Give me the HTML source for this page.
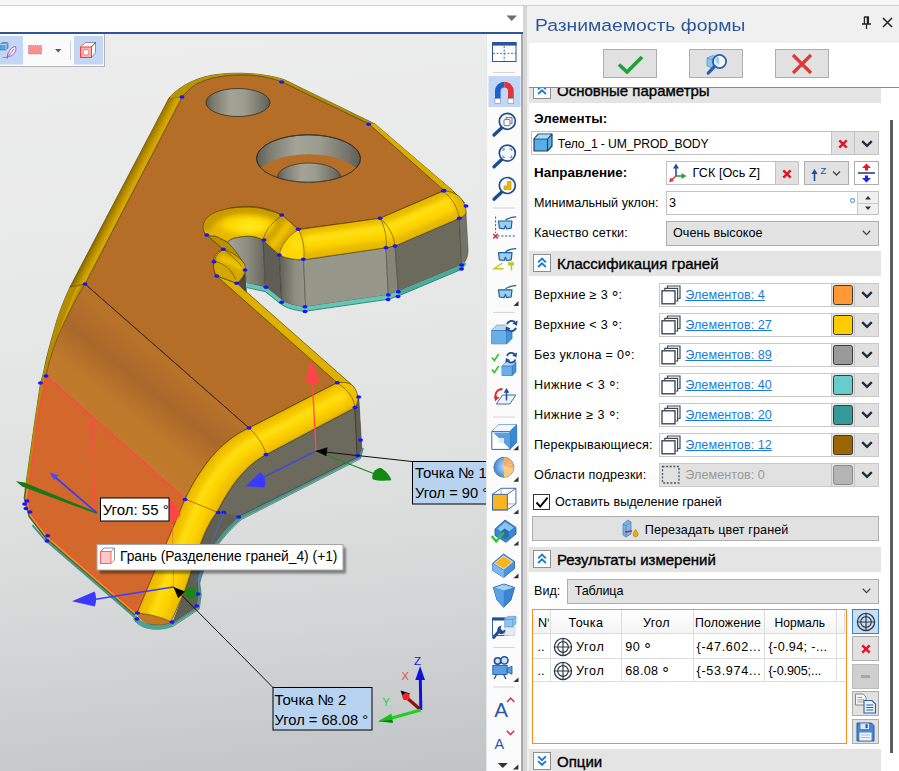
<!DOCTYPE html>
<html lang="ru">
<head>
<meta charset="utf-8">
<title>Разнимаемость формы</title>
<style>
*{box-sizing:border-box;margin:0;padding:0}
html,body{width:899px;height:771px;overflow:hidden;background:#fff}
body{position:relative;font-family:"Liberation Sans","DejaVu Sans",sans-serif;font-size:12.6px;color:#000}
.abs{position:absolute}
.t{position:absolute;white-space:nowrap;line-height:1}
#topstrip{left:0;top:0;width:524px;height:34px;background:#fff}
#topstrip .g0{left:0;top:0;width:899px;height:5px;background:#f7f7f7}
#topline{left:0;top:5px;width:899px;height:1px;background:#cfcfcf}
#blueline{left:0;top:32px;width:523px;height:2px;background:#2f5597}
#vp{left:0;top:34px;width:487px;height:737px;background:linear-gradient(174deg,#ecedec 0%,#e7e9e8 35%,#dfe1e0 60%,#d2d5d5 80%,#c1c4c5 100%);overflow:hidden}
#vtb{left:486px;top:34px;width:37px;height:737px;background:#fbfbfb;border-left:1px solid #e6e6e6;border-right:2px solid #a9a9a9}
#sep{left:523px;top:6px;width:4px;height:765px;background:#d6d6d6}
#panel{left:527px;top:6px;width:372px;height:765px;background:#f0f0f0}
#pwhite{left:529px;top:43px;width:370px;height:728px;background:#fff}
#pline{left:529px;top:87px;width:370px;height:1px;background:#8a8a8a}
.sh{position:absolute;left:529px;width:352px;background:#e4e4e4}
.sh .ic{position:absolute;left:4px;top:3px;width:18px;height:18px;border:1px solid #8f8f8f;background:#fdfdfd}
.sh .tt{position:absolute;left:28px;top:4px;font-size:15px;line-height:17px;white-space:nowrap;-webkit-text-stroke:0.35px #000}
.btn{position:absolute;background:#e1e1e1;border:1px solid #adadad}
.inp{position:absolute;background:#fff;border:1px solid #c3c3c3}
.dg{font-size:1.32em;line-height:0;position:relative;top:4.2px;letter-spacing:0}
.lnk{color:#1a7ae0;text-decoration:underline}
</style>
</head>
<body>
<!-- top strip -->
<div class="abs" id="topstrip"><div class="abs g0"></div></div>
<div class="abs" id="sep"></div>
<div class="abs" id="panel"></div>
<div class="abs" style="left:0;top:0;width:899px;height:5px;background:#f7f7f7"></div>
<div class="abs" id="topline"></div>
<div class="abs" id="blueline"></div>
<svg class="abs" style="left:506px;top:15px" width="12" height="7" viewBox="0 0 12 7"><path d="M0.5,0.5 L11,0.5 L5.7,6 Z" fill="#6d6d6d"/></svg>

<!-- 3D viewport -->
<div class="abs" id="vp">
<svg class="abs" style="left:0;top:0" width="487" height="737" viewBox="0 34 487 737">
<defs>
<linearGradient id="gYel" x1="0" y1="0" x2="0" y2="1"><stop offset="0" stop-color="#c99d00"/><stop offset="0.35" stop-color="#ffd500"/><stop offset="0.7" stop-color="#f6c400"/><stop offset="1" stop-color="#d9a800"/></linearGradient>
<linearGradient id="gBend" gradientUnits="userSpaceOnUse" x1="190" y1="340" x2="110" y2="440"><stop offset="0" stop-color="#b56e28"/><stop offset="0.25" stop-color="#b8732a"/><stop offset="0.5" stop-color="#aa682a"/><stop offset="0.75" stop-color="#be792b"/><stop offset="1" stop-color="#c27a2c"/></linearGradient>
<linearGradient id="gHole" x1="0" y1="0" x2="1" y2="0"><stop offset="0" stop-color="#5e5e54"/><stop offset="0.12" stop-color="#7c7c70"/><stop offset="0.38" stop-color="#a3a396"/><stop offset="0.6" stop-color="#9c9c8f"/><stop offset="0.88" stop-color="#74746a"/><stop offset="1" stop-color="#5c5c54"/></linearGradient>
<linearGradient id="gCorner" x1="0" y1="0" x2="1" y2="0"><stop offset="0" stop-color="#5e5e54"/><stop offset="0.6" stop-color="#8e8e82"/><stop offset="1" stop-color="#96968a"/></linearGradient>
<linearGradient id="gNotch" x1="0" y1="0" x2="1" y2="0"><stop offset="0" stop-color="#a4a498"/><stop offset="0.5" stop-color="#8e8e82"/><stop offset="1" stop-color="#66665c"/></linearGradient>
<filter id="bl4" filterUnits="userSpaceOnUse" x="0" y="0" width="500" height="800"><feGaussianBlur stdDeviation="3.2"/></filter>
<filter id="bl2" filterUnits="userSpaceOnUse" x="0" y="0" width="500" height="800"><feGaussianBlur stdDeviation="2"/></filter>
<clipPath id="cArm"><path d="M337.3,382.7 L249,428 C227,438 205,458 185,499 L137,613 C140,622 150,626 165,624 L171,622 L185,590 L199.5,547 C205,530 212,518 217,512 C225,497 240,468 266,454.6 L355,407.6 C360,400 358,390 351.5,384.5 C347,382 342,382 337.3,382.7 Z"/></clipPath>
<clipPath id="cFront"><path d="M443.3,191 L380,218.3 L298.5,229.6 L282.5,215.3 C275,212 270,210.8 268,210.4 C262,208 255,207.3 248.5,207.2 C240,207 233,207.6 227.4,208.8 C220,210.5 215,212 211.2,214.5 C206,218 203,222.5 203.1,227.4 C203.2,231 204.5,233.5 207.2,235.5 L216,236.3 L227.4,242 C230,239.5 233,238 237.1,237.5 C241,236.5 246,236.2 250.1,236.3 C255,236.5 259.5,238 263.1,240.4 L279.3,255 C285,258 295,260 303.6,259.8 L386,247.7 L395,246 L459.3,218.3 C463,217 465.5,215 466,212.7 C466.3,207 463.5,200 458,195.5 C454,192.5 449,191 443.3,191 Z"/></clipPath>
<clipPath id="cHole2"><ellipse cx="308.5" cy="158.5" rx="52" ry="23.7"/></clipPath>
<linearGradient id="gRimL" gradientUnits="userSpaceOnUse" x1="117.5" y1="192" x2="129.5" y2="198.2"><stop offset="0" stop-color="#6a5200"/><stop offset="0.3" stop-color="#a07c00"/><stop offset="0.75" stop-color="#cfa200"/><stop offset="1" stop-color="#dcae00"/></linearGradient>
<filter id="bl1" filterUnits="userSpaceOnUse" x="0" y="0" width="500" height="800"><feGaussianBlur stdDeviation="1.3"/></filter>
</defs>

<!-- silhouette (yellow rim) -->
<path d="M169,98 C180,85 200,76 218,74.4 C235,72 265,73 284.3,79.7 L375,124 L452.6,190.5 L464.5,202.7 L443,195 L300,240 L237,284 L351,384.5 L337,390 L185,505 L137,613 L48,536 L32,515 L27.5,498 L25.2,489.4 L34.7,422 L40.5,383 L43.4,373 C46,358 50,345 53.5,332 C58,315 64,300 70,287 Z" fill="#d6a900" stroke="#4a3c00" stroke-width="0.7"/>
<!-- left rim shading -->
<path d="M169,98 L70,287 L85,284 L182,97 Z" fill="url(#gRimL)"/>
<path d="M70,287 C64,300 58,315 53.5,332 L43.4,373 L40.5,383 L34.7,422 L25.2,489.4 L29,488 L37.6,420 L46,376 C50,355 60,325 85,284 Z" fill="#b48c00"/>
<path d="M79,286 C70,302 60,332 50,362" fill="none" stroke="#d8aa00" stroke-width="2.5" opacity="0.8"/>
<path d="M70,287 L85,284 M169,98 L182,97" stroke="#3a2e00" stroke-width="0.5"/>
<!-- top right rim -->
<path d="M282,82 L369,124 L375,124 L284.3,79.7 Z" fill="#ae8e08"/>
<path d="M369,124 L444,190.5 L452.6,190.5 L375,124 Z" fill="#d8ac00"/>
<path d="M182,97 C188,90 192,87 195.4,84.6 C204,80 212,78 218,77 C228,75 240,74.5 248,75 C262,76 272,78 282,82 L284.3,79.7 C265,73 235,72 218,74.4 C200,76 180,85 169,98 Z" fill="#b89600"/>

<!-- bottom thin strips under red face -->
<path d="M27.7,487.8 L26.2,498.1 L30.9,515.6 L47.1,537.0 L136.1,614.0" fill="none" stroke="#d4a800" stroke-width="2.8" stroke-linejoin="round"/>
<path d="M25.9,487.5 L24.4,498.3 L29.3,516.5 L45.9,538.3 L135.0,615.3" fill="none" stroke="#5a5a44" stroke-width="1.6" stroke-linejoin="round"/>
<path d="M32.4,525.1 L44.8,539.6 L133.9,616.6" fill="none" stroke="#4a9688" stroke-width="2" stroke-linejoin="round"/>
<path d="M134.5,616 C140,627.5 160,628.5 172.5,623.5 L197,607.5 L199,594.5 L197.6,582.5 C205,552.5 223,532.5 240.2,517.3 L358.6,456.8 L361.3,447.5" fill="none" stroke="#4a9688" stroke-width="3.8" stroke-linejoin="round"/>
<path d="M133.3,618.5 C140,630.5 160,631.5 173.5,626 L199.2,609 L201.2,594.8 L199.7,583 C207.2,553.8 225,534.2 241.4,519.5 L360.3,458.8 L363.3,448.3" fill="none" stroke="#2c5c54" stroke-width="0.7" stroke-linejoin="round"/>
<path d="M138,617 C142,626 160,628 172,623 L172.5,626.5 C160,631.5 140,630.5 134.5,619 Z" fill="#4fa294"/>

<!-- flat orange top -->
<path d="M182,97 C188,90 192,87 195.4,84.6 C204,80 212,78 218,77 C228,75 240,74.5 248,75 C262,76 272,78 282,82 L369,124 L444,190.5 L380,218.3 L298.3,229.3 C290,222 285,217 281.7,215 C270,208 250,205 240,206.7 C225,208 210,214 205,223 C203,229 204,233 206.7,235 L223.3,249.3 C216,252 212,258 214,262 C213,268 214,273 216.7,276 L337.3,382.7 L249,428 L85,284 Z" fill="#b56e28" stroke="#3a2a10" stroke-width="0.6"/>
<!-- bend -->
<path d="M85,284 L249,428 C227,438 205,458 185,499 L46,376 C50,355 60,325 85,284 Z" fill="url(#gBend)" stroke="#3a2a10" stroke-width="0.5"/>
<!-- red face -->
<path d="M46,376 L185,499 L137,613 L48,536 L32,515 L27.5,498 L29,488 L37.6,420 Z" fill="#d3682c"/>
<path d="M46,376 L185,499 L137,613 L48,536 L32,515 L27.5,498 L29,488 L37.6,420 Z" fill="none" stroke="#ff4848" stroke-width="1.6" stroke-linejoin="round"/>

<!-- holes -->
<ellipse cx="238" cy="102.5" rx="32" ry="14" fill="url(#gHole)" stroke="#2e2e26" stroke-width="0.8"/>
<ellipse cx="308.5" cy="158.5" rx="52" ry="23.7" fill="url(#gHole)" stroke="#2e2e26" stroke-width="0.8"/>
<g clip-path="url(#cHole2)">
  <ellipse cx="308.5" cy="178" rx="52" ry="23.7" fill="#b56e28"/>
  <ellipse cx="309" cy="177" rx="31.5" ry="14" fill="url(#gHole)" stroke="#2e2e26" stroke-width="0.7"/>
</g>
<ellipse cx="308.5" cy="158.5" rx="52" ry="23.7" fill="none" stroke="#2e2e26" stroke-width="0.8"/>

<!-- arm lower-right rim -->
<path d="M216.7,276 L337.3,382.7 L351.5,384.5 L236.7,283.3 Z" fill="#deb000" stroke="#4a3c00" stroke-width="0.5"/>

<!-- grey under arm -->
<path d="M266,454.6 L355,407.6 L358.8,398.5 L361.7,447.4 L358.2,456.7 L239.4,516 C225,528 205,550 197,580 L198,594 L196,607 L173,622 L185,590 L199.5,547 C205,530 212,518 217,512 C225,497 240,468 266,454.6 Z" fill="#6b6a5c" stroke="#2e2e26" stroke-width="0.5"/>
<path d="M354.7,408.5 L358.8,398.5 L361.7,447.4 L358.2,456.7 L356.8,452 Z" fill="#5e5e55"/>
<path d="M354.7,408.5 C355.8,425 356.3,440 356.8,452 L358.2,456.7" fill="none" stroke="#26261f" stroke-width="0.6"/>
<path d="M217,512 L239.4,516 C225,528 205,550 197,580 L198,594 L196,607 L173,622 L185,590 L199.5,547 C205,530 212,518 217,512 Z" fill="#5f5f54"/>

<!-- arm yellow fillet -->
<g clip-path="url(#cArm)">
  <rect x="120" y="370" width="260" height="270" fill="#f0c000"/>
  <path d="M346,395 L258,441 C236,452 216,472 200,508 L155,618" fill="none" stroke="#ffd600" stroke-width="16" filter="url(#bl4)"/>
  <path d="M347,393 L257,439 C234,450 214,470 197,505 L152,616" fill="none" stroke="#ffe11a" stroke-width="5" filter="url(#bl2)" opacity="0.8"/>
  <path d="M357,407.5 L268,457 C244,469 229,493 219,515 L201,549 L187,593 L174,623" fill="none" stroke="#c29600" stroke-width="3.4" filter="url(#bl2)"/>
  <path d="M337,382 L249,427.5 C227,437.5 204.5,457.5 184.5,498.5 L136.5,612.5" fill="none" stroke="#d4a600" stroke-width="2.5" filter="url(#bl2)"/>
</g>
<path d="M337.3,382.7 L249,428 C227,438 205,458 185,499 L137,613 C140,622 150,626 165,624 L171,622 L185,590 L199.5,547 C205,530 212,518 217,512 C225,497 240,468 266,454.6 L355,407.6 C360,400 358,390 351.5,384.5 C347,382 342,382 337.3,382.7 Z" fill="none" stroke="#3a2e00" stroke-width="0.6"/>
<path d="M137,613 C150,614 164,618 171,622 L165,624 C150,626 140,622 137,613 Z" fill="#bf7a22"/>
<path d="M141,618.5 C150,621.5 160,622.5 168,622.5" fill="none" stroke="#ff5050" stroke-width="0.7" stroke-dasharray="2 1.5"/>
<path d="M249,428 C258,436 264,446 266,454.6 M185,499 L217,512 M337.3,382.7 C348,390 354,398 355,407.6 M137,613 C150,614 164,618 171,622" fill="none" stroke="#3a2e00" stroke-width="0.5"/>

<!-- front block greys -->
<path d="M227.4,242 C230,239.5 233,238 237.1,237.5 C241,236.5 246,236.2 250.1,236.3 C255,236.5 259.5,238 263.1,240.4 L265.5,287.4 L246.9,283.3 L245.3,272.8 L243.6,263.1 L234.7,250.1 Z" fill="url(#gNotch)" stroke="#2e2e26" stroke-width="0.4"/>
<path d="M237.1,283.3 L245.3,272.8 L246.9,292.3 L244.4,290.6 Z" fill="#4a4a42"/>
<path d="M263.1,240.4 L279.3,255 L281.7,300.4 L265.5,287.4 Z" fill="#5e5e54" stroke="#2e2e26" stroke-width="0.4"/>
<path d="M279.3,255 C287,258.5 295,260 303.6,259.8 L305.6,306.9 C297,306.5 288,304.5 281.7,300.4 Z" fill="url(#gCorner)" stroke="#2e2e26" stroke-width="0.4"/>
<path d="M303.6,259.8 L386,247.7 L388.3,295 L305.6,306.9 Z" fill="#969689" stroke="#2e2e26" stroke-width="0.4"/>
<path d="M386,247.7 L395,246 L398.3,291.7 L388.3,295 Z" fill="#85857a" stroke="#2e2e26" stroke-width="0.4"/>
<path d="M395,246 L459.3,218.3 L461.7,265 L398.3,291.7 Z" fill="#6b6a5c" stroke="#2e2e26" stroke-width="0.4"/>
<path d="M459.3,218.3 C463,217 465.5,215 466,212.7 L468.1,250 C468,257 466,262 461.7,265 Z" fill="#74746a" stroke="#2e2e26" stroke-width="0.4"/>
<!-- teal under front block -->
<path d="M246.9,285.3 L265.5,289.4 L281.7,302.4 C288,306.5 297,308.7 305.6,308.9 L388.3,297 L398.3,293.7 L461.7,267" fill="none" stroke="#5fc8b8" stroke-width="4" stroke-linejoin="round"/>
<path d="M398.3,293.7 L461.7,267 L464.8,262.5" fill="none" stroke="#4cac9c" stroke-width="4" stroke-linejoin="round"/>
<path d="M246.9,287.6 L265.5,291.7 L281.7,304.7 C288,308.8 297,311 305.6,311.2 L388.3,299.3 L398.3,296 L461.7,269.3" fill="none" stroke="#2e7a70" stroke-width="0.9"/>

<!-- rim sliver at notch -->
<path d="M207.2,235.5 L216,236.3 L227.4,242 L234.7,250.1 L243.6,263.1 L223.4,249.3 Z" fill="#b89200" stroke="#3a2e00" stroke-width="0.4"/>

<!-- front yellow fillet -->
<g clip-path="url(#cFront)">
  <rect x="200" y="185" width="270" height="80" fill="#e6b600"/>
  <path d="M454,203 L388,231 L303,243" fill="none" stroke="#ffd800" stroke-width="17" filter="url(#bl4)"/>
  <path d="M452,200 L386,228 L304,240" fill="none" stroke="#ffe11a" stroke-width="6" filter="url(#bl2)" opacity="0.85"/>
  <path d="M281.7,215.3 L298.5,229.6 L279.3,255 L263.1,240.4 Z" fill="#d2a400"/>
  <path d="M290,222.5 L271,248" fill="none" stroke="#f2c400" stroke-width="7" filter="url(#bl2)"/>
  <path d="M298.5,229.6 C303,238 305,250 303.6,259.8 C295,260 285,258 279.3,255 C281,245 288,236 298.5,229.6 Z" fill="#ffd600"/>
  <path d="M292,246 L300,244" fill="none" stroke="#ffe420" stroke-width="9" filter="url(#bl4)"/>
  <path d="M206,231 C206,216 228,209 250,210 C264,211 274,214 282,219" fill="none" stroke="#c79a00" stroke-width="9" filter="url(#bl2)"/>
  <ellipse cx="247" cy="225" rx="26" ry="9" fill="#ffdc00" filter="url(#bl4)"/>
  <ellipse cx="250" cy="226" rx="14" ry="5.5" fill="#ffe71a" filter="url(#bl4)"/>
</g>
<path d="M443.3,191 L380,218.3 L298.5,229.6 L282.5,215.3 C275,212 270,210.8 268,210.4 C262,208 255,207.3 248.5,207.2 C240,207 233,207.6 227.4,208.8 C220,210.5 215,212 211.2,214.5 C206,218 203,222.5 203.1,227.4 C203.2,231 204.5,233.5 207.2,235.5 L216,236.3 L227.4,242 C230,239.5 233,238 237.1,237.5 C241,236.5 246,236.2 250.1,236.3 C255,236.5 259.5,238 263.1,240.4 L279.3,255 C285,258 295,260 303.6,259.8 L386,247.7 L395,246 L459.3,218.3 C463,217 465.5,215 466,212.7 C466.3,207 463.5,200 458,195.5 C454,192.5 449,191 443.3,191 Z" fill="none" stroke="#3a2e00" stroke-width="0.6"/>
<path d="M282.5,215.3 C272,222 265,231 263.1,240.4 M298.5,229.6 C288,236 281,245 279.3,255 M298.5,229.6 C303,238 305,250 303.6,259.8 M380,218.3 C385,227 387,238 386,247.7 M380,218.3 C389,226 394,236 395,246 M443.3,191 C452,198 458,208 459.3,218.3" fill="none" stroke="#3a2e00" stroke-width="0.5"/>

<!-- small notch yellow -->
<path d="M223.4,249.3 C218,253 214.5,257.5 214.5,261.5 C212.5,267 214,272.5 216.9,276 L237.1,283.3 C241,280 244,276 245.3,271.2 C245.6,268.5 245.2,266 244.4,263.9 C240,257.5 232,252 223.4,249.3 Z" fill="#d4a800" stroke="#3a2e00" stroke-width="0.6"/>
<path d="M219,259 C227,259 237,264 242.5,269" fill="none" stroke="#f6ca00" stroke-width="5" filter="url(#bl2)"/>
<path d="M214.5,261.5 C224,263 232,270 235.5,279.5 M223.4,249.3 C232,256 239,262 242,267" fill="none" stroke="#3a2e00" stroke-width="0.5"/>

<!-- tangent line -->
<path d="M85,284 L249,428" stroke="#2a1c08" stroke-width="0.7"/>

<!--ANNOT--><!-- vertices -->
<g fill="#1414ff">
<ellipse cx="182" cy="97" rx="2.5" ry="1.8"/>
<ellipse cx="281.6" cy="82" rx="2.5" ry="1.8"/>
<ellipse cx="368.6" cy="124.3" rx="2.5" ry="1.8"/>
<ellipse cx="444" cy="190.5" rx="2.5" ry="1.8"/>
<ellipse cx="85" cy="284" rx="2.5" ry="1.8"/>
<ellipse cx="249" cy="428" rx="2.5" ry="1.8"/>
<ellipse cx="46" cy="376" rx="2.5" ry="1.8"/>
<ellipse cx="40.5" cy="383" rx="2.5" ry="1.8"/>
<ellipse cx="337.3" cy="382.7" rx="2.5" ry="1.8"/>
<ellipse cx="355" cy="407.6" rx="2.5" ry="1.8"/>
<ellipse cx="266" cy="454.6" rx="2.5" ry="1.8"/>
<ellipse cx="357.6" cy="455.7" rx="2.5" ry="1.8"/>
<ellipse cx="358.7" cy="397" rx="2.5" ry="1.8"/>
<ellipse cx="185" cy="499.5" rx="2.5" ry="1.8"/>
<ellipse cx="218.3" cy="512.5" rx="2.5" ry="1.8"/>
<ellipse cx="224" cy="512.5" rx="2.5" ry="1.8"/>
<ellipse cx="238.6" cy="517" rx="2.5" ry="1.8"/>
<ellipse cx="137.4" cy="613" rx="2.5" ry="1.8"/>
<ellipse cx="137" cy="619" rx="2.5" ry="1.8"/>
<ellipse cx="172" cy="622" rx="2.5" ry="1.8"/>
<ellipse cx="196.6" cy="606" rx="2.5" ry="1.8"/>
<ellipse cx="198" cy="594" rx="2.5" ry="1.8"/>
<ellipse cx="24.6" cy="504" rx="2.5" ry="1.8"/>
<ellipse cx="26" cy="508.5" rx="2.5" ry="1.8"/>
<ellipse cx="30" cy="512" rx="2.5" ry="1.8"/>
<ellipse cx="27" cy="501" rx="2.5" ry="1.8"/>
<ellipse cx="47.7" cy="535.7" rx="2.5" ry="1.8"/>
<ellipse cx="47" cy="541" rx="2.5" ry="1.8"/>
<ellipse cx="360.5" cy="440" rx="2.5" ry="1.8"/>
<ellipse cx="206.7" cy="235" rx="2.5" ry="1.8"/>
<ellipse cx="223.3" cy="249.3" rx="2.5" ry="1.8"/>
<ellipse cx="214" cy="261.7" rx="2.5" ry="1.8"/>
<ellipse cx="216.7" cy="276" rx="2.5" ry="1.8"/>
<ellipse cx="236.7" cy="283.3" rx="2.5" ry="1.8"/>
<ellipse cx="245" cy="270" rx="2.5" ry="1.8"/>
<ellipse cx="264" cy="240" rx="2.5" ry="1.8"/>
<ellipse cx="279.3" cy="255" rx="2.5" ry="1.8"/>
<ellipse cx="281.7" cy="215" rx="2.5" ry="1.8"/>
<ellipse cx="298.3" cy="229.3" rx="2.5" ry="1.8"/>
<ellipse cx="303.3" cy="259.3" rx="2.5" ry="1.8"/>
<ellipse cx="380" cy="218.3" rx="2.5" ry="1.8"/>
<ellipse cx="386" cy="247.7" rx="2.5" ry="1.8"/>
<ellipse cx="395" cy="246" rx="2.5" ry="1.8"/>
<ellipse cx="443.3" cy="191" rx="2.5" ry="1.8"/>
<ellipse cx="459.3" cy="218.3" rx="2.5" ry="1.8"/>
<ellipse cx="466" cy="206" rx="2.5" ry="1.8"/>
<ellipse cx="461.7" cy="265" rx="2.5" ry="1.8"/>
<ellipse cx="398.3" cy="291.7" rx="2.5" ry="1.8"/>
<ellipse cx="388.3" cy="295" rx="2.5" ry="1.8"/>
<ellipse cx="305" cy="306.7" rx="2.5" ry="1.8"/>
<ellipse cx="281.7" cy="302.3" rx="2.5" ry="1.8"/>
<ellipse cx="266" cy="287.3" rx="2.5" ry="1.8"/>
<ellipse cx="305" cy="311.5" rx="2.5" ry="1.8"/>
<ellipse cx="388" cy="299.5" rx="2.5" ry="1.8"/>
<ellipse cx="398" cy="296.5" rx="2.5" ry="1.8"/>
<ellipse cx="461.5" cy="269" rx="2.5" ry="1.8"/>
</g>
<!-- point 1 arrows -->
<path d="M316,451 L312.3,380" stroke="#ff4a4a" stroke-width="1.3"/>
<path d="M311.6,359.6 L319.8,381.6 C316.5,384.2 308.5,384.2 305.3,381.6 Z" fill="#ff4545"/>
<path d="M316,451 L262,478" stroke="#3c3cff" stroke-width="1.3"/>
<path d="M245.6,486.3 L260,472.6 C264,474 266.5,482 264.8,487.6 Z" fill="#3a3aff"/>
<path d="M316,451 L376,474.5" stroke="#1a8a1a" stroke-width="1.3"/>
<path d="M391.5,480.3 C386,481 378,481.2 372.6,479.2 C371,474 375,468.6 380.6,467.8 C385,470 389.5,475 391.5,480.3 Z" fill="#148a14"/>
<path d="M316,451 L412,461.5" stroke="#111" stroke-width="1"/>
<path d="M316,451 L327.5,447.3 L326.3,456.3 Z" fill="#000"/>
<rect x="412.5" y="461.5" width="90" height="42.5" fill="#b7d3ef" stroke="#000" stroke-width="1"/>
<text x="415" y="478" font-family="'Liberation Sans',sans-serif" font-size="15" fill="#000">Точка № 1</text>
<text x="415" y="498.4" font-family="'Liberation Sans',sans-serif" font-size="14.7" fill="#000">Угол = 90 °</text>

<!-- point 2 arrows -->
<path d="M173.5,587 L172.5,520" stroke="#ff5a5a" stroke-width="0.8" opacity="0.8"/>
<path d="M168.3,497 C173,502 178,508 180.6,514.5 L172.6,524.5 C170,516 168.5,506 168.3,497 Z" fill="#ff4545"/>
<path d="M196,582 L224,512.5" stroke="#5a5aff" stroke-width="0.8"/>
<path d="M173.5,587 L94,599.5" stroke="#3c3cff" stroke-width="1.3"/>
<path d="M72,601.3 L94.5,591.6 C96.5,595.5 96.5,602.5 94.8,606.6 Z" fill="#3a3aff"/>
<circle cx="190.9" cy="593" r="5.6" fill="#148a14"/>
<path d="M173.5,587 L273,687.5" stroke="#111" stroke-width="1"/>
<path d="M173.5,587 L185,591.6 L178.2,598.3 Z" fill="#000"/>
<rect x="273" y="687.5" width="99" height="42.5" fill="#b7d3ef" stroke="#000" stroke-width="1"/>
<text x="274.6" y="705" font-family="'Liberation Sans',sans-serif" font-size="15" fill="#000">Точка № 2</text>
<text x="274.6" y="725" font-family="'Liberation Sans',sans-serif" font-size="14.7" fill="#000">Угол = 68.08 °</text>

<!-- angle arrows -->
<path d="M95.4,518 L92,424" stroke="#ff4a4a" stroke-width="1.2"/>
<path d="M91.6,417.5 L94.6,428.5 L89.4,428.7 Z" fill="#ff4a4a"/>
<path d="M97,513 L52,474.5" stroke="#3c3cf0" stroke-width="1.7"/>
<path d="M49.6,472.6 L58.5,475.2 L54.4,480.2 Z" fill="#4a4aff"/>
<path d="M15.9,481.3 L24.5,482.6 L97,512.4 L96.4,513.8 L22.5,486.8 Z" fill="#187818"/>
<rect x="100.5" y="498" width="68.5" height="23" fill="#fff" stroke="#000" stroke-width="1"/>
<text x="102.7" y="515.4" font-family="'Liberation Sans',sans-serif" font-size="15" fill="#000">Угол: 55 °</text>

<!-- tooltip -->
<rect x="100" y="547.5" width="246" height="26" fill="#000" opacity="0.42" filter="url(#bl1)"/>
<rect x="97" y="544.5" width="246" height="25.5" fill="#fff" stroke="#a6a6a6" stroke-width="1"/>
<path d="M100.5,551.5 L104,548 L114.5,548 L114.5,560 L111,563.5 L100.5,563.5 Z" fill="#fff" stroke="#7a7a7a" stroke-width="0.8"/>
<rect x="100.5" y="551.5" width="10.5" height="12" fill="#ffc9c9" stroke="#ff5a5a" stroke-width="0.9"/>
<path d="M111,551.5 L114.5,548" stroke="#7a7a7a" stroke-width="0.8"/>
<text x="120" y="561" font-family="'Liberation Sans',sans-serif" font-size="13.8" fill="#000">Грань (Разделение граней_4) (+1)</text>

<!-- triad -->
<path d="M420.8,710 L406,697" stroke="#8b1010" stroke-width="3.2"/>
<path d="M400.5,690.5 L410,693.5 L404,700 Z" fill="#000"/>
<circle cx="406" cy="696.6" r="3.6" fill="#ff2020"/>
<path d="M420.8,710 L420.3,678" stroke="#1010e0" stroke-width="3"/>
<path d="M420.1,666 L425,680 L415.3,680 Z" fill="#1010e0"/>
<path d="M420.8,710 L390,718.5" stroke="#20d020" stroke-width="3"/>
<path d="M378,721.2 L391.5,713.5 L393,722.8 Z" fill="#18c018"/>
<path d="M378,721.2 L393,722.8 L392,720 Z" fill="#0a7a0a"/>
<text x="414" y="664.5" font-family="'Liberation Sans',sans-serif" font-size="11.5" fill="#1414e6">Z</text>
<text x="401.5" y="680" font-family="'Liberation Sans',sans-serif" font-size="11" fill="#e84a4a">X</text>
<text x="382.5" y="706" font-family="'Liberation Sans',sans-serif" font-size="11" fill="#30d030">Y</text>
<!--/ANNOT-->
</svg>

</div>

<!-- vertical toolbar -->
<div class="abs" id="vtb"></div>
<svg class="abs" style="left:486px;top:34px" width="37" height="737" viewBox="486 34 37 737">
<defs>
<linearGradient id="gMagL" x1="0" y1="0" x2="1" y2="0"><stop offset="0" stop-color="#1f5fd0"/><stop offset="1" stop-color="#2a6ae0"/></linearGradient>
<linearGradient id="gBox" x1="0" y1="0" x2="1" y2="1"><stop offset="0" stop-color="#6fb6ee"/><stop offset="1" stop-color="#1f6fc4"/></linearGradient>
</defs>
<!-- 1 grid -->
<rect x="492.5" y="42.5" width="23.5" height="19" fill="#fff" stroke="#2f5597" stroke-width="1"/>
<rect x="492" y="42" width="24.5" height="3.6" fill="#2f5597"/>
<path d="M504.2,46 L504.2,61 M493,53.3 L516,53.3" stroke="#4a6fb0" stroke-width="1" stroke-dasharray="2 1.6"/>
<path d="M493,72.5 L515,72.5" stroke="#d4d4d4" stroke-width="1"/>
<!-- 2 magnet -->
<rect x="488.5" y="76" width="32" height="31" fill="#c3d6f3"/>
<path d="M495,103 L495,91 A9.3,9.3 0 0 1 504.3,81.7 L504.3,87.5 A3.6,3.6 0 0 0 500.6,91 L500.6,103 Z" fill="#1f5fd0"/>
<path d="M513.7,103 L513.7,91 A9.3,9.3 0 0 0 504.3,81.7 L504.3,87.5 A3.6,3.6 0 0 1 508,91 L508,103 Z" fill="#e0343a"/>
<rect x="495" y="98.5" width="5.6" height="4.8" fill="#fff" stroke="#8090b0" stroke-width="0.6"/><rect x="508" y="98.5" width="5.7" height="4.8" fill="#fff" stroke="#8090b0" stroke-width="0.6"/>
<!-- 3-5 magnifiers -->
<g fill="none" stroke="#1f4e8c">
<path d="M501.5,128 L494,135" stroke-width="3.4" stroke-linecap="round"/><circle cx="507.3" cy="121.3" r="8" stroke-width="1.7" fill="#f4f8fd"/>
<path d="M501.5,159.8 L494,166.8" stroke-width="3.4" stroke-linecap="round"/><circle cx="507.3" cy="153.1" r="8" stroke-width="1.7" fill="#f4f8fd"/>
<path d="M501.5,192.2 L494,199.2" stroke-width="3.4" stroke-linecap="round"/><circle cx="507.3" cy="185.5" r="8" stroke-width="1.7" fill="#f4f8fd"/>
</g>
<rect x="504" y="119.6" width="6" height="6" rx="1" fill="#fff" stroke="#6a7480" stroke-width="1"/><path d="M506,119 L506,117.6 L512,117.6 L512,123.6 L510.6,123.6" fill="none" stroke="#6a7480" stroke-width="1"/>
<path d="M503,151 L503,149 L505,149 M509.6,149 L511.6,149 L511.6,151 M511.6,155.4 L511.6,157.4 L509.6,157.4 M505,157.4 L503,157.4 L503,155.4" fill="none" stroke="#8a98aa" stroke-width="1.3"/>
<path d="M504,186 L507.4,186 L507.4,181.4 L511,181.4 L511,189.6 L504,189.6 Z" fill="#f2b400" stroke="#b07c00" stroke-width="0.5"/>
<path d="M493,208 L515,208" stroke="#d4d4d4" stroke-width="1"/>
<!-- glasses icons -->
<g id="gl">
<path d="M498.5,221 L499.4,228.2 L504.2,228.8 L505.4,225.6 L506.6,228.8 L511.2,228.2 L512,221 Z" fill="#9ccdf0" stroke="#1f5f9c" stroke-width="1.2" stroke-linejoin="round"/>
<path d="M505.5,220 C509,217.8 513,216.8 516.2,216.9" fill="none" stroke="#1f5f9c" stroke-width="1.3"/>
</g>
<path d="M495.6,216.5 L495.6,233 M497.5,236 L516,236" stroke="#3a5a9a" stroke-width="1" stroke-dasharray="2.2 1.6"/>
<path d="M493.3,234 L497.8,238.6 M497.8,234 L493.3,238.6" stroke="#e02020" stroke-width="1.5"/>
<use href="#gl" y="31.7"/>
<path d="M502.5,263 L494,268.8 L503.5,268.8" fill="none" stroke="#c4c81e" stroke-width="1.4"/>
<path d="M508,262.2 L514,262.2 L514,265.4 L512.2,265.4 L512.2,270.3 L510.6,270.3 L510.6,265.4 L508,265.4 Z" fill="#c4c81e"/>
<use href="#gl" y="68.8"/>
<path d="M518.5,301 L518.5,306 L513.3,306 Z" fill="#333"/>
<path d="M493,312.4 L515,312.4" stroke="#d4d4d4" stroke-width="1"/>
<!-- cube refresh -->
<path d="M491.7,330.5 L497,325.2 L512,325.2 L512,338.5 L506.7,343.8 L491.7,343.8 Z" fill="#4a94dc" stroke="#1f5f9c" stroke-width="0.7"/>
<path d="M491.7,330.5 L497,325.2 L512,325.2 L506.7,330.5 Z" fill="#b4d8f6"/>
<rect x="491.7" y="330.5" width="15" height="13.3" fill="#6aaee8"/>
<path d="M491.7,330.5 L506.7,330.5 L506.7,343.8 M506.7,330.5 L512,325.2" fill="none" stroke="#2a6cb4" stroke-width="0.7"/>
<circle cx="511.5" cy="326" r="5.8" fill="#fbfbfb"/>
<path d="M515.5,323 A4.8,4.8 0 0 0 507,324.2" fill="none" stroke="#1f4e9c" stroke-width="1.9"/><path d="M517.6,320.6 L517,325.8 L512.4,323.4 Z" fill="#1f4e9c"/>
<path d="M507.5,329 A4.8,4.8 0 0 0 516,327.8" fill="none" stroke="#1f4e9c" stroke-width="1.9"/><path d="M505.4,331.4 L506,326.2 L510.6,328.6 Z" fill="#1f4e9c"/>
<!-- checks + cube refresh -->
<path d="M502,366 L505.6,362.3 L515.9,362.3 L515.9,371.7 L512.3,375.4 L502,375.4 Z" fill="#4a94dc" stroke="#1f5f9c" stroke-width="0.7"/>
<path d="M502,366 L505.6,362.3 L515.9,362.3 L512.3,366 Z" fill="#b4d8f6"/>
<rect x="502" y="366" width="10.3" height="9.4" fill="#6aaee8"/>
<path d="M502,366 L512.3,366 L512.3,375.4 M512.3,366 L515.9,362.3" fill="none" stroke="#2a6cb4" stroke-width="0.7"/>
<path d="M491.9,357.5 L494.4,360.6 L498.6,354 M491.9,369.5 L494.4,372.6 L498.6,366" fill="none" stroke="#2ec42e" stroke-width="1.6"/>
<circle cx="511.2" cy="357.7" r="5.6" fill="#fbfbfb"/>
<path d="M515,354.8 A4.5,4.5 0 0 0 507,356" fill="none" stroke="#1f4e9c" stroke-width="1.8"/><path d="M517,352.6 L516.5,357.4 L512.2,355.2 Z" fill="#1f4e9c"/>
<path d="M507.4,360.6 A4.5,4.5 0 0 0 515.4,359.4" fill="none" stroke="#1f4e9c" stroke-width="1.8"/><path d="M505.4,362.8 L505.9,358 L510.2,360.2 Z" fill="#1f4e9c"/>
<!-- rotate + plane -->
<path d="M496.4,404 L502.5,395 L515.9,395 L509.8,404 Z" fill="#eef3fa" stroke="#4a6a9a" stroke-width="1"/>
<path d="M506.5,391 L506.5,400.5" stroke="#1f4e9c" stroke-width="1.5"/><path d="M506.5,388 L509.3,392.8 L503.7,392.8 Z" fill="#1f4e9c"/>
<path d="M502.5,389 C496.5,389.5 494.2,394 496.2,398" fill="none" stroke="#e02a2a" stroke-width="1.8"/><path d="M495,401.6 L494,396 L499.6,397.2 Z" fill="#e02a2a"/>
<path d="M493,417 L515,417" stroke="#d4d4d4" stroke-width="1"/>
<!-- shaded box -->
<path d="M491.8,431.5 L498.6,424.8 L516.6,424.8 L516.6,442.5 L509.8,449.4 L491.8,449.4 Z" fill="#fff" stroke="#2a6cb4" stroke-width="1"/>
<path d="M509.8,431.5 L516.6,424.8 L516.6,442.5 L509.8,449.4 Z" fill="#3a88d8"/>
<path d="M491.8,431.5 L498.6,424.8 L516.6,424.8 L509.8,431.5 Z" fill="#f2f8fe"/>
<path d="M493,432.6 L509,432.6 L509,448 L504,443 L498.5,438 Z" fill="#5a9fe0"/><path d="M493,432.6 L498.5,438 L498.5,443 L493,448.2 Z" fill="#fff"/><path d="M498.5,438 L504,438 L504,443 L498.5,443 Z" fill="#dcebf9"/>
<path d="M491.8,431.5 L509.8,431.5 L509.8,449.4 M509.8,431.5 L516.6,424.8" fill="none" stroke="#2a6cb4" stroke-width="0.9"/>
<path d="M518.5,445.4 L518.5,450.2 L513.3,450.2 Z" fill="#333"/>
<!-- sphere -->
<defs><radialGradient id="gSph" cx="0.62" cy="0.45" r="0.7"><stop offset="0" stop-color="#d6e8fa"/><stop offset="0.5" stop-color="#7fb2e6"/><stop offset="1" stop-color="#2f78c8"/></radialGradient></defs>
<circle cx="503.9" cy="467.3" r="10" fill="url(#gSph)" stroke="#3a6aa8" stroke-width="0.8"/>
<path d="M503.9,457.3 A10,10 0 0 1 513.9,467.3 L503.9,467.3 Z" fill="#f6aa66"/>
<path d="M503.9,467.3 L513.9,467.3 A10,10 0 0 1 503.9,477.3 Z" fill="#f8c872"/>
<path d="M503.9,467.3 L511,460.2 M503.9,467.3 L513.2,463.6 M503.9,467.3 L513.2,471 M503.9,467.3 L511,474.4" stroke="#fbe0b0" stroke-width="0.6"/>
<path d="M518.5,476.8 L518.5,481.8 L513.3,481.8 Z" fill="#333"/>
<!-- yellow cube -->
<path d="M492.5,494.3 L501.1,488.3 L515.9,488.3 L515.9,503.9 L507.3,509.9 L492.5,509.9 Z" fill="#fff" stroke="#2a5ca4" stroke-width="0.9"/>
<path d="M501.1,488.3 L501.1,503.9 L515.9,503.9 M501.1,503.9 L492.5,509.9" fill="none" stroke="#6a8ab8" stroke-width="0.7"/>
<rect x="492.5" y="494.3" width="14.8" height="15.6" fill="#f9b41e" stroke="#2a5ca4" stroke-width="0.9"/>
<path d="M507.3,494.3 L515.9,488.3" stroke="#2a5ca4" stroke-width="0.9"/>
<path d="M518.5,509.6 L518.5,514 L513.3,514 Z" fill="#333"/>
<!-- box + check -->
<path d="M495,529 L505,520 L516,527.5 L516,534 L506,542.3 L495,535.5 Z" fill="#3a86d4" stroke="#1f5a9c" stroke-width="0.8"/>
<path d="M497.6,528.6 L505.2,522 L513.6,527.6 L509,531.5 L504.6,528.6 L501,531.6 Z" fill="#8cc4f0"/>
<path d="M501,531.6 L504.6,528.6 L509,531.5 L509,536.5 L505,539.5 L501,536.6 Z" fill="#2a6cb4"/>
<path d="M491.8,536 L496.2,541.4 L503.8,532.4" fill="none" stroke="#2ec42e" stroke-width="2.4"/>
<path d="M518.5,541 L518.5,545.6 L513.3,545.6 Z" fill="#333"/>
<!-- box + orange face -->
<path d="M492.5,563.5 L503.5,554 L514.6,561.5 L514.6,568.5 L503.8,577.4 L492.5,570.5 Z" fill="#4a94dc" stroke="#1f5a9c" stroke-width="0.8"/>
<path d="M492.5,563.5 L503.8,570.6 L503.8,577.4 L492.5,570.5 Z" fill="#7fb8ec"/>
<path d="M494.5,563.3 L503.5,555.8 L512.6,561.8 L503.8,569 Z" fill="#f9b41e" stroke="#fff" stroke-width="0.7"/>
<path d="M518.5,573.6 L518.5,578.2 L513.3,578.2 Z" fill="#333"/>
<!-- bucket prism -->
<path d="M493.3,587.5 L504,584 L514.6,587.5 L511,600 L503.6,607.3 L497,600 Z" fill="#3a86d4" stroke="#1f5a9c" stroke-width="0.8"/>
<path d="M493.3,587.5 L503.8,591 L503.6,607.3 L497,600 Z" fill="#5aa0e2"/>
<path d="M494.6,587.5 L504,584.6 L513.4,587.5 L503.8,590.6 Z" fill="#a8d2f4"/>
<!-- wrench + box -->
<rect x="492.5" y="618" width="16" height="17.5" fill="#fff" stroke="#1f4e9c" stroke-width="0.9"/><rect x="492.5" y="617.7" width="12" height="2.8" fill="#1f4e9c"/>
<rect x="504.5" y="627" width="10.5" height="8.6" fill="#e6eaf0" stroke="#c0c8d4" stroke-width="0.6"/>
<path d="M504.7,619.4 L507.7,616.4 L515.9,616.4 L515.9,623.8 L512.9,626.8 L504.7,626.8 Z" fill="#8cc4f0" stroke="#4a8ac4" stroke-width="0.6"/>
<path d="M504.7,619.4 L512.9,619.4 L512.9,626.8 M512.9,619.4 L515.9,616.4" fill="none" stroke="#4a8ac4" stroke-width="0.6"/>
<path d="M493.6,637.4 L499.6,630.6" stroke="#1f4e9c" stroke-width="3" stroke-linecap="round"/>
<path d="M498,627.5 A4.2,4.2 0 1 0 505.6,629.8 L502.5,630.8 L500.6,628.6 L501.6,625.8 A4.2,4.2 0 0 0 498,627.5 Z" fill="#1f4e9c"/>
<path d="M493,647.5 L515,647.5" stroke="#d4d4d4" stroke-width="1"/>
<!-- camera -->
<circle cx="497.6" cy="661" r="3.2" fill="#cfe2f6" stroke="#1f4e9c" stroke-width="1.6"/><circle cx="504.4" cy="660.4" r="3.6" fill="#cfe2f6" stroke="#1f4e9c" stroke-width="1.6"/>
<rect x="492.8" y="665.5" width="14.4" height="9" fill="#5a9ee0" stroke="#1f4e9c" stroke-width="0.8"/><path d="M507.2,668.4 L512,666.2 L512,674.2 L507.2,672 Z" fill="#5a9ee0" stroke="#1f4e9c" stroke-width="0.8"/>
<path d="M496.5,674.5 L494.2,679 M503.6,674.5 L505.9,679" stroke="#1f4e9c" stroke-width="1.3"/>
<path d="M518.5,677.4 L518.5,682 L513.3,682 Z" fill="#333"/>
<path d="M493,687 L515,687" stroke="#d4d4d4" stroke-width="1"/>
<!-- A^ Av -->
<text x="494.3" y="716.7" font-family="'Liberation Sans',sans-serif" font-size="20.6" fill="#2a56a8">A</text>
<path d="M507,702 L510.7,698.2 L514.4,702" fill="none" stroke="#d63a4c" stroke-width="1.6"/>
<text x="494.6" y="748.6" font-family="'Liberation Sans',sans-serif" font-size="14.4" fill="#2a56a8">A</text>
<path d="M506.8,730.8 L510.5,734.6 L514.2,730.8" fill="none" stroke="#d63a4c" stroke-width="1.6"/>
<path d="M497.8,763 L507.8,763 L502.8,767.9 Z" fill="#333"/>
<path d="M518.4,764.6 L518.4,769.5 L512.8,769.5 Z" fill="#333"/>
</svg>
<!-- floating mini toolbar -->
<div class="abs" style="left:0;top:34px;width:105px;height:33px;background:#fafafa;border-right:1px solid #b4b4b4;border-bottom:1px solid #b4b4b4"></div>
<svg class="abs" style="left:0;top:34px" width="105" height="33" viewBox="0 34 105 33">
<rect x="0" y="36" width="23" height="28.5" fill="#c3d6f3"/>
<rect x="74" y="36" width="29" height="28.5" fill="#c3d6f3"/>
<path d="M0,44.5 L2,42.5 L8,42.5 L8,48 L6,50 L0,50 Z" fill="#5aa6dc" stroke="#2f6fa8" stroke-width="0.6"/><path d="M0,44.5 L6,44.5 L8,42.5 M6,44.5 L6,50" fill="none" stroke="#cfe6f8" stroke-width="0.7"/>
<path d="M7,57.5 C9,50 12,46.5 15.5,46.5 C17,50 14.5,55.5 9,56.5 Z" fill="#f4eafa" stroke="#9a5ac4" stroke-width="0.9"/><path d="M2.5,57.5 L8,57.3 M7.5,53.5 L7.5,58.8 M8.5,56 L14,49" stroke="#9a5ac4" stroke-width="0.8" fill="none"/>
<rect x="28.5" y="45.5" width="13" height="8.5" fill="#ff8f8f" stroke="#7a6a9a" stroke-width="0.6" stroke-dasharray="1.2 1"/>
<path d="M55,49 L61.4,49 L58.2,52.4 Z" fill="#5a5a5a"/>
<path d="M70.5,41 L70.5,60" stroke="#d0d0d0" stroke-width="1"/>
<path d="M80.5,47 L85.5,42.5 L95.5,42.5 L95.5,52.5 L91.5,57.5 L80.5,57.5 Z" fill="#fff" stroke="#7a7a7a" stroke-width="0.8"/>
<path d="M91.5,47 L95.5,42.5" stroke="#333" stroke-width="0.9"/>
<rect x="80.5" y="47" width="11" height="10.5" fill="#ffb4b4" stroke="#ff3a3a" stroke-width="1"/>
<circle cx="86" cy="52.3" r="3" fill="#fff" stroke="#ff5a5a" stroke-width="0.8"/>
</svg>


<!-- panel -->
<div class="t" style="left:535px;top:16.72px;font-size:17.1px;color:#2b579a;transform:scaleX(1.1299);transform-origin:0 0">Разнимаемость формы</div>
<div class="abs" id="pwhite"></div>
<div class="abs" id="pline"></div>
<div class="btn" style="left:603px;top:49px;width:54px;height:29px"></div>
<div class="btn" style="left:689px;top:49px;width:54px;height:29px"></div>
<div class="btn" style="left:775px;top:49px;width:54px;height:29px"></div>
<svg class="abs" style="left:617px;top:54px" width="27" height="20" viewBox="0 0 27 20"><path d="M2,10.5 L10,18 L25,3" fill="none" stroke="#21a038" stroke-width="3.6" stroke-linejoin="miter"/></svg>
<svg class="abs" style="left:704px;top:52px" width="26" height="24" viewBox="0 0 26 24">
<path d="M3,6 L9,3.5 L15,6 L15,14 L9,16.5 L3,14 Z" fill="#8fc3ea" stroke="#5a9bd0" stroke-width="0.8"/>
<path d="M3,6 L9,8.5 L15,6 M9,8.5 L9,16.5" fill="none" stroke="#5a9bd0" stroke-width="0.8"/>
<circle cx="15.5" cy="9.5" r="6.6" fill="#ffffff" fill-opacity="0.75" stroke="#2b5fb0" stroke-width="1.8"/>
<path d="M11,8 L13,4.8 L15,5.8 L15,13" fill="#8fc3ea" fill-opacity="0.8" stroke="none"/>
<path d="M10.6,14.4 L4.2,21.2" stroke="#2b5fb0" stroke-width="3.2" stroke-linecap="round"/>
</svg>
<svg class="abs" style="left:791px;top:53px" width="22" height="22" viewBox="0 0 22 22"><path d="M2,2 L20,20 M20,2 L2,20" fill="none" stroke="#dc3a3a" stroke-width="3.2"/></svg>
<svg class="abs" style="left:861px;top:16px" width="11" height="14" viewBox="0 0 11 14"><path d="M3.2,1 L7.8,1 M3.4,1 L3.4,7.6 M7.4,1 L7.4,7.6 M6.4,1 L6.4,7.6 M1,8 L10,8 M5.5,8 L5.5,13" fill="none" stroke="#222" stroke-width="1.3"/></svg>
<svg class="abs" style="left:882px;top:17px" width="11" height="11" viewBox="0 0 11 11"><path d="M1,1 L10,10 M10,1 L1,10" fill="none" stroke="#222" stroke-width="1.5"/></svg>
<div class="abs" style="left:529px;top:88px;width:352px;height:15px;overflow:hidden"><div class="sh" style="left:0;top:-10px;height:25px"><div class="ic"><svg width="16" height="16" viewBox="0 0 17 17" style="display:block"><path d="M4.4,7.8 L8.5,3.8 L12.6,7.8 M4.4,12.8 L8.5,8.8 L12.6,12.8" fill="none" stroke="#1a7bd4" stroke-width="2"/></svg></div><div class="tt">Основные параметры</div></div></div>
<div class="sh" style="top:251px;height:25px"><div class="ic"><svg width="16" height="16" viewBox="0 0 17 17" style="display:block"><path d="M4.4,7.8 L8.5,3.8 L12.6,7.8 M4.4,12.8 L8.5,8.8 L12.6,12.8" fill="none" stroke="#1a7bd4" stroke-width="2"/></svg></div><div class="tt">Классификация граней</div></div>
<div class="sh" style="top:547px;height:25px"><div class="ic"><svg width="16" height="16" viewBox="0 0 17 17" style="display:block"><path d="M4.4,7.8 L8.5,3.8 L12.6,7.8 M4.4,12.8 L8.5,8.8 L12.6,12.8" fill="none" stroke="#1a7bd4" stroke-width="2"/></svg></div><div class="tt">Результаты измерений</div></div>
<div class="abs" style="left:529px;top:749px;width:352px;height:22px;overflow:hidden"><div class="sh" style="left:0;top:0px;height:25px"><div class="ic"><svg width="16" height="16" viewBox="0 0 17 17" style="display:block"><path d="M4.4,3.6 L8.5,7.6 L12.6,3.6 M4.4,8.6 L8.5,12.6 L12.6,8.6" fill="none" stroke="#1a7bd4" stroke-width="2"/></svg></div><div class="tt">Опции</div></div></div>
<div class="t" style="left:534.0px;top:112.36px;font-size:13.4px;font-weight:700;letter-spacing:0.074px;">Элементы:</div>
<div class="inp" style="left:531px;top:131px;width:348px;height:24px"></div>
<div class="abs" style="left:831px;top:132px;width:47px;height:22px;background:#e1e1e1;border-left:1px solid #c3c3c3"></div><div class="abs" style="left:854px;top:132px;width:1px;height:22px;background:#c3c3c3"></div>
<svg class="abs" style="left:837.5px;top:138.5px" width="10" height="10" viewBox="0 0 10 10"><path d="M1.3,1.3 L8.7,8.7 M8.7,1.3 L1.3,8.7" fill="none" stroke="#e81123" stroke-width="2.4" stroke-linecap="butt"/></svg>
<svg class="abs" style="left:860.5px;top:139.5px" width="12" height="8" viewBox="0 0 12 8"><path d="M1.2,1.2 L6,5.8 L10.8,1.2" fill="none" stroke="#1f2d3d" stroke-width="2.4" stroke-linecap="butt" stroke-linejoin="miter"/></svg>
<svg class="abs" style="left:533px;top:133px" width="20" height="19" viewBox="0 0 20 19">
<path d="M1,6 L5.5,1 L19,1 L19,13 L14.5,18 L1,18 Z" fill="#5aaee8" stroke="#1f3f63" stroke-width="1.2" stroke-linejoin="round"/>
<path d="M1,6 L14.5,6 L19,1 M14.5,6 L14.5,18" fill="none" stroke="#1f3f63" stroke-width="1.2"/>
<path d="M1.6,5.4 L5.8,1.6 L18,1.6 L14.2,5.4 Z" fill="#a8dcf5"/>
</svg>
<div class="t" style="left:557.8px;top:138.27px;font-size:12.2px;letter-spacing:-0.151px;">Тело_1 - UM_PROD_BODY</div>
<div class="t" style="left:534.0px;top:166.26px;font-size:13.4px;font-weight:700;letter-spacing:0.037px;">Направление:</div>
<div class="inp" style="left:666px;top:161px;width:133px;height:24px"></div>
<div class="abs" style="left:775px;top:162px;width:23px;height:22px;background:#e1e1e1;border-left:1px solid #c3c3c3"></div>
<svg class="abs" style="left:781.5px;top:168.5px" width="10" height="10" viewBox="0 0 10 10"><path d="M1.3,1.3 L8.7,8.7 M8.7,1.3 L1.3,8.7" fill="none" stroke="#e81123" stroke-width="2.4" stroke-linecap="butt"/></svg>
<svg class="abs" style="left:668px;top:163px" width="19" height="20" viewBox="0 0 19 20">
<path d="M8,13 L8,3" stroke="#1f4e9c" stroke-width="1.6"/><path d="M8,0.5 L11,5.5 L5,5.5 Z" fill="#1f4e9c"/>
<path d="M8,13 L15,13" stroke="#2ea043" stroke-width="1.6"/><path d="M18.5,13 L13.5,10 L13.5,16 Z" fill="#2ea043"/>
<path d="M8,13 L3.5,17" stroke="#d83b3b" stroke-width="1.6"/><path d="M1,19.2 L2.5,14.6 L6,18 Z" fill="#d83b3b"/>
</svg>
<div class="t" style="left:692.5px;top:166.93px;font-size:12.6px;letter-spacing:0.058px;">ГСК [Ось Z]</div>
<div class="btn" style="left:804px;top:161px;width:45px;height:24px"></div>
<svg class="abs" style="left:809px;top:164px" width="36" height="20" viewBox="0 0 36 20"><path d="M5.5,17 L5.5,8" stroke="#1f4e9c" stroke-width="1.6"/><path d="M5.5,5 L8.6,10 L2.4,10 Z" fill="#1f4e9c"/><path d="M24,7.5 L27.5,11 L31,7.5" fill="none" stroke="#444" stroke-width="1.3"/></svg>
<div class="t" style="left:820.5px;top:166.26px;font-size:9.5px;color:#1f4e9c">Z</div>
<div class="abs" style="left:854px;top:161px;width:25px;height:24px;background:#fff;border:1px solid #adadad"></div>
<svg class="abs" style="left:857px;top:163px" width="19" height="20" viewBox="0 0 19 20"><path d="M1,10 L18,10" stroke="#1f3a6e" stroke-width="1.5"/><path d="M9.5,0.5 L14,5 L11,5 L11,7.5 L8,7.5 L8,5 L5,5 Z" fill="#f0141e"/><path d="M9.5,19.5 L14,15 L11,15 L11,12.5 L8,12.5 L8,15 L5,15 Z" fill="#1428f0"/></svg>
<div class="t" style="left:534.0px;top:196.93px;font-size:12.6px;letter-spacing:0.001px;">Минимальный уклон:</div>
<div class="inp" style="left:666px;top:191px;width:213px;height:24px"></div>
<div class="t" style="left:669.0px;top:196.93px;font-size:12.6px;">3</div>
<div class="abs" style="left:857px;top:192px;width:21px;height:22px;background:#f0f0f0;border-left:1px solid #c9c9c9"></div><div class="abs" style="left:858px;top:203px;width:20px;height:1px;background:#c9c9c9"></div>
<svg class="abs" style="left:864px;top:195px" width="8" height="16" viewBox="0 0 8 16"><path d="M4,1 L7,4.6 L1,4.6 Z M4,15 L7,11.4 L1,11.4 Z" fill="#333"/></svg>
<div class="abs" style="left:849.5px;top:198px;width:5px;height:5px;border:1px solid #2a8be0;border-radius:3px"></div>
<div class="t" style="left:534.0px;top:226.53px;font-size:12.6px;letter-spacing:0.168px;">Качество сетки:</div>
<div class="btn" style="left:666px;top:221px;width:213px;height:25px;background:#e3e3e3"></div>
<div class="t" style="left:673.0px;top:226.53px;font-size:12.6px;letter-spacing:0.026px;">Очень высокое</div>
<svg class="abs" style="left:862px;top:229.5px" width="9" height="6" viewBox="0 0 9 6"><path d="M0.8,0.8 L4.5,4.6 L8.2,0.8" fill="none" stroke="#444" stroke-width="1.3"/></svg>
<div class="t" style="left:534.0px;top:288.53px;font-size:12.6px;letter-spacing:0.318px;">Верхние ≥ 3 <span class="dg">°</span>:</div>
<div class="inp" style="left:659px;top:282.5px;width:220px;height:24px;background:#fff;border-color:#c9c9c9"></div>
<div class="abs" style="left:831px;top:283.5px;width:47px;height:22px;background:#e1e1e1;border-left:1px solid #c3c3c3"></div><div class="abs" style="left:854px;top:283.5px;width:1px;height:22px;background:#c3c3c3"></div>
<div class="abs" style="left:832.5px;top:285.0px;width:20px;height:19.5px;background:#ff9933;border:1px solid #3a3a3a;border-radius:2.5px"></div>
<svg class="abs" style="left:860.5px;top:291.0px" width="12" height="8" viewBox="0 0 12 8"><path d="M1.2,1.2 L6,5.8 L10.8,1.2" fill="none" stroke="#1f2d3d" stroke-width="2.4" stroke-linecap="butt" stroke-linejoin="miter"/></svg>
<svg class="abs" style="left:660.5px;top:284.5px" width="20" height="20" viewBox="0 0 20 20">
<path d="M6.5,3 L6.5,1 L19,1 L19,13.5 L17,13.5" fill="none" stroke="#3d4a57" stroke-width="1.2"/>
<path d="M3.8,5.5 L3.8,3.3 L16.6,3.3 L16.6,16 L14.4,16" fill="none" stroke="#3d4a57" stroke-width="1.2"/>
<rect x="1" y="5.8" width="13" height="13" fill="#fff" stroke="#3d4a57" stroke-width="1.4"/></svg>
<div class="t lnk" style="left:685.3px;top:288.53px;font-size:12.6px;letter-spacing:0.053px;">Элементов: 4</div>
<div class="t" style="left:534.0px;top:318.53px;font-size:12.6px;letter-spacing:0.286px;">Верхние &lt; 3 <span class="dg">°</span>:</div>
<div class="inp" style="left:659px;top:312.5px;width:220px;height:24px;background:#fff;border-color:#c9c9c9"></div>
<div class="abs" style="left:831px;top:313.5px;width:47px;height:22px;background:#e1e1e1;border-left:1px solid #c3c3c3"></div><div class="abs" style="left:854px;top:313.5px;width:1px;height:22px;background:#c3c3c3"></div>
<div class="abs" style="left:832.5px;top:315.0px;width:20px;height:19.5px;background:#ffcc00;border:1px solid #3a3a3a;border-radius:2.5px"></div>
<svg class="abs" style="left:860.5px;top:321.0px" width="12" height="8" viewBox="0 0 12 8"><path d="M1.2,1.2 L6,5.8 L10.8,1.2" fill="none" stroke="#1f2d3d" stroke-width="2.4" stroke-linecap="butt" stroke-linejoin="miter"/></svg>
<svg class="abs" style="left:660.5px;top:314.5px" width="20" height="20" viewBox="0 0 20 20">
<path d="M6.5,3 L6.5,1 L19,1 L19,13.5 L17,13.5" fill="none" stroke="#3d4a57" stroke-width="1.2"/>
<path d="M3.8,5.5 L3.8,3.3 L16.6,3.3 L16.6,16 L14.4,16" fill="none" stroke="#3d4a57" stroke-width="1.2"/>
<rect x="1" y="5.8" width="13" height="13" fill="#fff" stroke="#3d4a57" stroke-width="1.4"/></svg>
<div class="t lnk" style="left:685.3px;top:318.53px;font-size:12.6px;letter-spacing:0.048px;">Элементов: 27</div>
<div class="t" style="left:534.0px;top:348.53px;font-size:12.6px;letter-spacing:0.306px;">Без уклона = 0<span class="dg">°</span>:</div>
<div class="inp" style="left:659px;top:342.5px;width:220px;height:24px;background:#fff;border-color:#c9c9c9"></div>
<div class="abs" style="left:831px;top:343.5px;width:47px;height:22px;background:#e1e1e1;border-left:1px solid #c3c3c3"></div><div class="abs" style="left:854px;top:343.5px;width:1px;height:22px;background:#c3c3c3"></div>
<div class="abs" style="left:832.5px;top:345.0px;width:20px;height:19.5px;background:#999999;border:1px solid #3a3a3a;border-radius:2.5px"></div>
<svg class="abs" style="left:860.5px;top:351.0px" width="12" height="8" viewBox="0 0 12 8"><path d="M1.2,1.2 L6,5.8 L10.8,1.2" fill="none" stroke="#1f2d3d" stroke-width="2.4" stroke-linecap="butt" stroke-linejoin="miter"/></svg>
<svg class="abs" style="left:660.5px;top:344.5px" width="20" height="20" viewBox="0 0 20 20">
<path d="M6.5,3 L6.5,1 L19,1 L19,13.5 L17,13.5" fill="none" stroke="#3d4a57" stroke-width="1.2"/>
<path d="M3.8,5.5 L3.8,3.3 L16.6,3.3 L16.6,16 L14.4,16" fill="none" stroke="#3d4a57" stroke-width="1.2"/>
<rect x="1" y="5.8" width="13" height="13" fill="#fff" stroke="#3d4a57" stroke-width="1.4"/></svg>
<div class="t lnk" style="left:685.3px;top:348.53px;font-size:12.6px;letter-spacing:0.048px;">Элементов: 89</div>
<div class="t" style="left:534.0px;top:378.53px;font-size:12.6px;letter-spacing:0.425px;">Нижние &lt; 3 <span class="dg">°</span>:</div>
<div class="inp" style="left:659px;top:372.5px;width:220px;height:24px;background:#fff;border-color:#c9c9c9"></div>
<div class="abs" style="left:831px;top:373.5px;width:47px;height:22px;background:#e1e1e1;border-left:1px solid #c3c3c3"></div><div class="abs" style="left:854px;top:373.5px;width:1px;height:22px;background:#c3c3c3"></div>
<div class="abs" style="left:832.5px;top:375.0px;width:20px;height:19.5px;background:#66cccc;border:1px solid #3a3a3a;border-radius:2.5px"></div>
<svg class="abs" style="left:860.5px;top:381.0px" width="12" height="8" viewBox="0 0 12 8"><path d="M1.2,1.2 L6,5.8 L10.8,1.2" fill="none" stroke="#1f2d3d" stroke-width="2.4" stroke-linecap="butt" stroke-linejoin="miter"/></svg>
<svg class="abs" style="left:660.5px;top:374.5px" width="20" height="20" viewBox="0 0 20 20">
<path d="M6.5,3 L6.5,1 L19,1 L19,13.5 L17,13.5" fill="none" stroke="#3d4a57" stroke-width="1.2"/>
<path d="M3.8,5.5 L3.8,3.3 L16.6,3.3 L16.6,16 L14.4,16" fill="none" stroke="#3d4a57" stroke-width="1.2"/>
<rect x="1" y="5.8" width="13" height="13" fill="#fff" stroke="#3d4a57" stroke-width="1.4"/></svg>
<div class="t lnk" style="left:685.3px;top:378.53px;font-size:12.6px;letter-spacing:0.048px;">Элементов: 40</div>
<div class="t" style="left:534.0px;top:408.53px;font-size:12.6px;letter-spacing:0.459px;">Нижние ≥ 3 <span class="dg">°</span>:</div>
<div class="inp" style="left:659px;top:402.5px;width:220px;height:24px;background:#fff;border-color:#c9c9c9"></div>
<div class="abs" style="left:831px;top:403.5px;width:47px;height:22px;background:#e1e1e1;border-left:1px solid #c3c3c3"></div><div class="abs" style="left:854px;top:403.5px;width:1px;height:22px;background:#c3c3c3"></div>
<div class="abs" style="left:832.5px;top:405.0px;width:20px;height:19.5px;background:#339999;border:1px solid #3a3a3a;border-radius:2.5px"></div>
<svg class="abs" style="left:860.5px;top:411.0px" width="12" height="8" viewBox="0 0 12 8"><path d="M1.2,1.2 L6,5.8 L10.8,1.2" fill="none" stroke="#1f2d3d" stroke-width="2.4" stroke-linecap="butt" stroke-linejoin="miter"/></svg>
<svg class="abs" style="left:660.5px;top:404.5px" width="20" height="20" viewBox="0 0 20 20">
<path d="M6.5,3 L6.5,1 L19,1 L19,13.5 L17,13.5" fill="none" stroke="#3d4a57" stroke-width="1.2"/>
<path d="M3.8,5.5 L3.8,3.3 L16.6,3.3 L16.6,16 L14.4,16" fill="none" stroke="#3d4a57" stroke-width="1.2"/>
<rect x="1" y="5.8" width="13" height="13" fill="#fff" stroke="#3d4a57" stroke-width="1.4"/></svg>
<div class="t lnk" style="left:685.3px;top:408.53px;font-size:12.6px;letter-spacing:0.048px;">Элементов: 20</div>
<div class="t" style="left:534.0px;top:438.53px;font-size:12.6px;letter-spacing:0.194px;">Перекрывающиеся:</div>
<div class="inp" style="left:659px;top:432.5px;width:220px;height:24px;background:#fff;border-color:#c9c9c9"></div>
<div class="abs" style="left:831px;top:433.5px;width:47px;height:22px;background:#e1e1e1;border-left:1px solid #c3c3c3"></div><div class="abs" style="left:854px;top:433.5px;width:1px;height:22px;background:#c3c3c3"></div>
<div class="abs" style="left:832.5px;top:435.0px;width:20px;height:19.5px;background:#996600;border:1px solid #3a3a3a;border-radius:2.5px"></div>
<svg class="abs" style="left:860.5px;top:441.0px" width="12" height="8" viewBox="0 0 12 8"><path d="M1.2,1.2 L6,5.8 L10.8,1.2" fill="none" stroke="#1f2d3d" stroke-width="2.4" stroke-linecap="butt" stroke-linejoin="miter"/></svg>
<svg class="abs" style="left:660.5px;top:434.5px" width="20" height="20" viewBox="0 0 20 20">
<path d="M6.5,3 L6.5,1 L19,1 L19,13.5 L17,13.5" fill="none" stroke="#3d4a57" stroke-width="1.2"/>
<path d="M3.8,5.5 L3.8,3.3 L16.6,3.3 L16.6,16 L14.4,16" fill="none" stroke="#3d4a57" stroke-width="1.2"/>
<rect x="1" y="5.8" width="13" height="13" fill="#fff" stroke="#3d4a57" stroke-width="1.4"/></svg>
<div class="t lnk" style="left:685.3px;top:438.53px;font-size:12.6px;letter-spacing:0.048px;">Элементов: 12</div>
<div class="t" style="left:534.0px;top:468.53px;font-size:12.6px;letter-spacing:0.153px;">Области подрезки:</div>
<div class="inp" style="left:659px;top:462.5px;width:220px;height:24px;background:#e1e1e1;border-color:#c9c9c9"></div>
<div class="abs" style="left:831px;top:463.5px;width:47px;height:22px;background:#e1e1e1;border-left:1px solid #c3c3c3"></div><div class="abs" style="left:854px;top:463.5px;width:1px;height:22px;background:#c3c3c3"></div>
<div class="abs" style="left:832.5px;top:465.0px;width:20px;height:19.5px;background:#b4b4b4;border:1px solid #8a8a8a;border-radius:2.5px"></div>
<svg class="abs" style="left:860.5px;top:471.0px" width="12" height="8" viewBox="0 0 12 8"><path d="M1.2,1.2 L6,5.8 L10.8,1.2" fill="none" stroke="#1f2d3d" stroke-width="2.4" stroke-linecap="butt" stroke-linejoin="miter"/></svg>
<svg class="abs" style="left:661px;top:465.0px" width="20" height="20" viewBox="0 0 20 20">
<rect x="1.5" y="1.5" width="16.5" height="16.5" fill="none" stroke="#4a5560" stroke-width="1.3" stroke-dasharray="2 1.6"/></svg>
<div class="t" style="left:685.3px;top:468.53px;font-size:12.6px;color:#9a9a9a;letter-spacing:0.053px;">Элементов: 0</div>
<div class="abs" style="left:533px;top:494px;width:16.5px;height:16px;background:#fff;border:1px solid #333"></div>
<svg class="abs" style="left:534.5px;top:495.5px" width="14" height="13" viewBox="0 0 14 13"><path d="M1.5,6.5 L5.2,10.6 L12.6,1.6" fill="none" stroke="#000" stroke-width="1.9"/></svg>
<div class="t" style="left:555.0px;top:495.73px;font-size:12.6px;letter-spacing:0.021px;">Оставить выделение граней</div>
<div class="btn" style="left:532px;top:516px;width:347px;height:25px"></div>
<svg class="abs" style="left:621px;top:519px" width="19" height="19" viewBox="0 0 19 19">
<path d="M2,5 L7,1 L10,3 L10,15 L5,18 L2,16 Z" fill="#7fb4e0" stroke="#4d86bd" stroke-width="0.8"/>
<path d="M2,5 L5,7 L10,3 M5,7 L5,18" fill="none" stroke="#4d86bd" stroke-width="0.8"/>
<path d="M4,13 L11,12" stroke="#e02020" stroke-width="1.3"/>
<path d="M14.6,10.6 C16,12.8 17,14 17,15.3 A2.4,2.4 0 0 1 12.2,15.3 C12.2,14 13.2,12.8 14.6,10.6 Z" fill="#f2b200" stroke="#a87400" stroke-width="0.7"/>
</svg>
<div class="t" style="left:644.8px;top:523.53px;font-size:12.6px;letter-spacing:0.088px;">Перезадать цвет граней</div>
<div class="t" style="left:534.0px;top:584.73px;font-size:12.6px;">Вид:</div>
<div class="btn" style="left:567px;top:579px;width:312px;height:25px;background:#e3e3e3"></div>
<div class="t" style="left:574.7px;top:584.73px;font-size:12.6px;letter-spacing:-0.101px;">Таблица</div>
<svg class="abs" style="left:862px;top:588px" width="9" height="6" viewBox="0 0 9 6"><path d="M0.8,0.8 L4.5,4.6 L8.2,0.8" fill="none" stroke="#444" stroke-width="1.3"/></svg>
<div class="abs" style="left:532px;top:609px;width:315px;height:135px;background:#fff;border:1px solid #ff8c1a"></div>
<div class="abs" style="left:533px;top:610px;width:313px;height:24px;background:linear-gradient(#ffffff,#f4f4f4);border-bottom:1px solid #dcdcdc"></div>
<div class="abs" style="left:533px;top:657.5px;width:313px;height:1px;background:#dcdcdc"></div><div class="abs" style="left:533px;top:681px;width:313px;height:1px;background:#dcdcdc"></div>
<div class="abs" style="left:549.5px;top:610px;width:1px;height:72px;background:#dedede"></div>
<div class="abs" style="left:621px;top:610px;width:1px;height:72px;background:#dedede"></div>
<div class="abs" style="left:692.5px;top:610px;width:1px;height:72px;background:#dedede"></div>
<div class="abs" style="left:763.5px;top:610px;width:1px;height:72px;background:#dedede"></div>
<div class="abs" style="left:835.5px;top:610px;width:1px;height:72px;background:#dedede"></div>
<div class="abs" style="left:843.5px;top:610px;width:1px;height:24px;background:#dedede"></div>
<div class="abs" style="left:536px;top:612px;width:12.5px;height:20px;overflow:hidden"><div class="t" style="left:2.0px;top:4.83px;font-size:12.6px;">N°</div>
</div>
<div class="t" style="left:568.5px;top:616.83px;font-size:12.6px;letter-spacing:0.439px;">Точка</div>
<div class="t" style="left:643.0px;top:616.83px;font-size:12.6px;letter-spacing:0.240px;">Угол</div>
<div class="t" style="left:695.0px;top:617.09px;font-size:12.3px;letter-spacing:0.111px;">Положение</div>
<div class="t" style="left:774.5px;top:617.30px;font-size:12.05px;letter-spacing:0.014px;">Нормаль</div>
<div class="t" style="left:537.5px;top:640.83px;font-size:12.6px;">..</div>
<svg class="abs" style="left:553.3px;top:636.7px" width="20" height="20" viewBox="0 0 20 20"><circle cx="10" cy="10" r="8.6" fill="none" stroke="#2f3a46" stroke-width="1.3"/><circle cx="10" cy="10" r="5.3" fill="none" stroke="#2f3a46" stroke-width="1.2"/><path d="M10,1 L10,19 M1,10 L19,10" stroke="#2f3a46" stroke-width="1.2"/></svg>
<div class="t" style="left:576.0px;top:640.83px;font-size:12.6px;letter-spacing:0.665px;">Угол</div>
<div class="t" style="left:625.2px;top:640.83px;font-size:12.6px;letter-spacing:0.486px;">90 <span class="dg">°</span></div>
<div class="t" style="left:696.5px;top:640.83px;font-size:12.6px;letter-spacing:0.687px;">{-47.602...</div>
<div class="t" style="left:768.5px;top:640.83px;font-size:12.6px;letter-spacing:0.364px;">{-0.94; -...</div>
<div class="t" style="left:537.5px;top:664.63px;font-size:12.6px;">..</div>
<svg class="abs" style="left:553.3px;top:660.5px" width="20" height="20" viewBox="0 0 20 20"><circle cx="10" cy="10" r="8.6" fill="none" stroke="#2f3a46" stroke-width="1.3"/><circle cx="10" cy="10" r="5.3" fill="none" stroke="#2f3a46" stroke-width="1.2"/><path d="M10,1 L10,19 M1,10 L19,10" stroke="#2f3a46" stroke-width="1.2"/></svg>
<div class="t" style="left:576.0px;top:664.63px;font-size:12.6px;letter-spacing:0.665px;">Угол</div>
<div class="t" style="left:625.2px;top:664.63px;font-size:12.6px;letter-spacing:0.347px;">68.08 <span class="dg">°</span></div>
<div class="t" style="left:696.5px;top:664.63px;font-size:12.6px;letter-spacing:0.687px;">{-53.974...</div>
<div class="t" style="left:768.5px;top:664.63px;font-size:12.6px;letter-spacing:-0.113px;">{-0.905;...</div>
<div class="btn" style="left:852px;top:609px;width:27px;height:25px;background:#c7def5;border-color:#3f7fbf"></div>
<svg class="abs" style="left:855.5px;top:611.5px" width="20" height="20" viewBox="0 0 20 20"><circle cx="10" cy="10" r="8.6" fill="none" stroke="#2f3a46" stroke-width="1.3"/><circle cx="10" cy="10" r="5.3" fill="none" stroke="#2f3a46" stroke-width="1.2"/><path d="M10,1 L10,19 M1,10 L19,10" stroke="#2f3a46" stroke-width="1.2"/></svg>
<div class="btn" style="left:852px;top:636px;width:27px;height:25px"></div>
<svg class="abs" style="left:860.5px;top:644px" width="10" height="10" viewBox="0 0 10 10"><path d="M1.3,1.3 L8.7,8.7 M8.7,1.3 L1.3,8.7" fill="none" stroke="#e81123" stroke-width="2.4" stroke-linecap="butt"/></svg>
<div class="btn" style="left:852px;top:664px;width:27px;height:25px;background:#cfcfcf;border-color:#bdbdbd"></div><div class="abs" style="left:861px;top:675px;width:9px;height:3px;background:#a6a6a6"></div>
<div class="btn" style="left:852px;top:691px;width:27px;height:25px"></div>
<svg class="abs" style="left:854px;top:693px" width="23" height="21" viewBox="0 0 23 21">
<path d="M1.5,1 L9,1 L12,4 L12,12 L1.5,12 Z" fill="#f4f4f4" stroke="#7a7a7a" stroke-width="0.9"/><path d="M3.5,4.5 L8,4.5 M3.5,6.8 L10,6.8 M3.5,9 L10,9" stroke="#8a8a8a" stroke-width="0.8"/>
<path d="M10,7.5 L18,7.5 L21.5,11 L21.5,20 L10,20 Z" fill="#eaf1fb" stroke="#2b5fa8" stroke-width="1.1"/><path d="M12.3,12 L19.3,12 M12.3,14.5 L19.3,14.5 M12.3,17 L19.3,17" stroke="#2b5fa8" stroke-width="1"/>
</svg>
<div class="btn" style="left:852px;top:719px;width:27px;height:25px"></div>
<svg class="abs" style="left:856px;top:722px" width="19" height="20" viewBox="0 0 19 20">
<path d="M1,1 L15.5,1 L18,3.5 L18,19 L1,19 Z" fill="#4a86cf" stroke="#2a5c9e" stroke-width="1"/>
<rect x="4.5" y="1.5" width="8.5" height="5.5" fill="#dfe9f6"/><rect x="9.5" y="2.3" width="2.2" height="3.8" fill="#2a5c9e"/>
<rect x="3.5" y="10.5" width="12" height="8" fill="#f2f6fb"/><path d="M5,13 L14,13 M5,15.6 L14,15.6" stroke="#9ab3d4" stroke-width="0.9"/>
</svg>
<div class="abs" style="left:890px;top:120px;width:3px;height:633px;background:#5d5d5d"></div>

</body>
</html>
